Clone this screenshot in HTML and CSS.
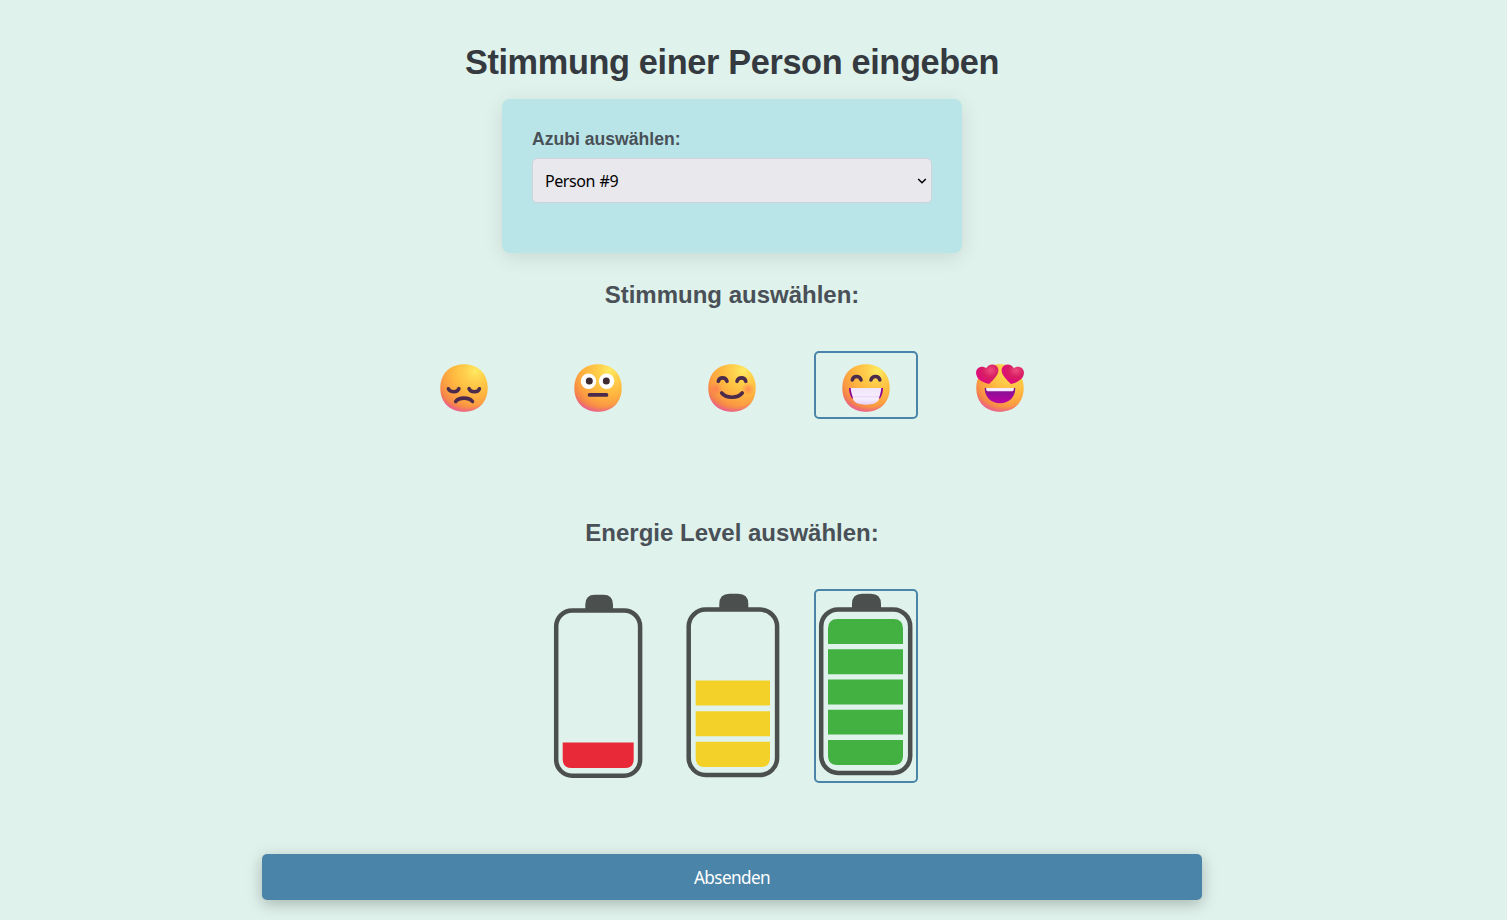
FILE: index.html
```html
<!DOCTYPE html>
<html lang="de">
<head>
<meta charset="utf-8">
<title>Stimmung einer Person eingeben</title>
<link rel="stylesheet" href="styles.css">
</head>
<body>
<svg class="defs" width="0" height="0" aria-hidden="true">
  <defs>
    <radialGradient id="skin" cx="0.74" cy="0.14" r="0.95">
      <stop offset="0" stop-color="#ffea62"/><stop offset="0.22" stop-color="#ffd14c"/><stop offset="0.5" stop-color="#ffb940"/><stop offset="0.76" stop-color="#fb9c42"/><stop offset="1" stop-color="#ee7052"/>
    </radialGradient>
    <radialGradient id="glow" cx="0.56" cy="0.27" r="0.76">
      <stop offset="0.83" stop-color="#ee5ba0" stop-opacity="0"/><stop offset="1" stop-color="#e458b4" stop-opacity="0.8"/>
    </radialGradient>
    <radialGradient id="blush"><stop offset="0" stop-color="#ff7058" stop-opacity="0.65"/><stop offset="1" stop-color="#ff7058" stop-opacity="0"/></radialGradient>
    <radialGradient id="heart" cx="0.65" cy="0.3" r="0.75"><stop offset="0" stop-color="#ee4b80"/><stop offset="0.45" stop-color="#d81f62"/><stop offset="1" stop-color="#e00484"/></radialGradient>
    <linearGradient id="mouth" x2="0" y2="1"><stop offset="0" stop-color="#7c1590"/><stop offset="1" stop-color="#bd00a4"/></linearGradient>
    <linearGradient id="teeth" x2="0" y2="1"><stop offset="0" stop-color="#f0e5fa"/><stop offset="0.65" stop-color="#f7eeff"/><stop offset="1" stop-color="#e5d2fa"/></linearGradient>
    <g id="face">
      <path d="M24 .3C38 .3 47.700 9.500 47.700 24S38 47.700 24 47.700.3 38.500.3 24 10 .3 24 .3Z" fill="url(#skin)"/>
      <path d="M24 .3C38 .3 47.700 9.500 47.700 24S38 47.700 24 47.700.3 38.500.3 24 10 .3 24 .3Z" fill="url(#glow)"/>
    </g>
  </defs>
</svg>
<main class="page">
  <h1 class="title">Stimmung einer Person eingeben</h1>
  <section class="card">
    <label class="label" for="person">Azubi auswählen:</label>
    <div class="select-wrap">
      <select class="select" id="person"><option>Person #9</option></select>
      <svg class="chevron" viewBox="0 0 10 8"><path d="M1.200 2L5 5.800L8.800 2"/></svg>
    </div>
  </section>

  <h2 class="heading">Stimmung auswählen:</h2>
  <div class="row">
    <div class="mood"><svg class="emoji" viewBox="0 0 48 48"><use href="#face"/><g class="ink"><path d="M8.400 24.800C9.700 28.700 17.500 28.700 18.900 24.600"/><path d="M29 24.600C30.500 28.700 38.300 28.700 39.400 24.800"/><path d="M15.700 37.500C19 33 29 33 32.500 37.500"/></g></svg></div>
    <div class="mood"><svg class="emoji" viewBox="0 0 48 48"><use href="#face"/><circle cx="14.500" cy="17.300" r="7.700" fill="#fff"/><circle cx="32.600" cy="17.300" r="7.700" fill="#fff"/><circle cx="15.300" cy="17" r="3.500" fill="#402a32"/><circle cx="32.300" cy="17" r="3.500" fill="#402a32"/><rect x="13.800" y="29" width="20.400" height="3.800" rx="1.500" fill="#4b2b4c"/></svg></div>
    <div class="mood"><svg class="emoji" viewBox="0 0 48 48"><use href="#face"/><circle cx="8" cy="25" r="6.500" fill="url(#blush)"/><circle cx="40" cy="25" r="6.500" fill="url(#blush)"/><g class="ink"><path d="M10.300 17.300C11.300 12.700 17.800 12.700 19 17.300"/><path d="M29 17.300C30.200 12.700 36.800 12.700 37.800 17.300"/><path d="M13.700 29C18.300 34.600 29.700 34.600 34.200 29"/></g></svg></div>
    <div class="mood selected"><svg class="emoji" viewBox="0 0 48 48"><use href="#face"/><g class="ink"><path d="M10.300 15.900C11.300 11.300 17.800 11.300 19 15.900"/><path d="M29 15.900C30.200 11.300 36.800 11.300 37.800 15.900"/></g><path d="M7 24H41C41 27.500 40 31.500 38 34.500L10 34.500C8 31.500 7 27.500 7 24Z" fill="#890491"/><path d="M8.700 24H39.300C39 27.500 38.300 30.200 37.300 33L36.800 35.500C34.500 42.400 13.500 42.400 11.200 35.500L10.700 33C9.700 30 9 27.500 8.700 24Z" fill="url(#teeth)"/><path d="M11 32.800H37" stroke="#e3cdf3" stroke-width=".8"/></svg></div>
    <div class="mood"><svg class="emoji" viewBox="0 0 48 48"><use href="#face"/><path d="M8.700 24H39.300C39.300 33 33.300 39.200 24 39.200S8.700 33 8.700 24Z" fill="url(#mouth)"/><path d="M10.200 24H37.800V25.600Q37.800 27.200 36.200 27.200H11.800Q10.200 27.200 10.200 25.600Z" fill="#f5ecff"/><path d="M13 20C5.500 18.300-.3 14.300.1 8.200C.4 3.200 6.500 1 10.200 4.300C12.300-.6 20-1 22 4.200C24 9.500 17.500 16 13 20Z" fill="url(#heart)"/><path d="M35 20C42.500 18.300 48.300 14.300 47.900 8.200C47.600 3.200 41.500 1 37.800 4.300C35.700-.6 28-1 26 4.200C24 9.500 30.500 16 35 20Z" fill="url(#heart)"/></svg></div>
  </div>

  <h2 class="heading energy-heading">Energie Level auswählen:</h2>
  <div class="row">
    <div class="level"><svg class="battery" viewBox="0 0 100 190"><path class="cap" d="M37.300 19V13.500Q37.300 3.700 47 3.700H55.300Q65 3.700 65 13.500V19Z"/><rect class="shell" x="8.200" y="19.500" width="83.900" height="165.200" rx="16"/><path fill="#e82937" d="M14.700 151.500H85.700V168Q85.700 177 77 177H23.700Q14.700 177 14.700 168Z"/></svg></div>
    <div class="level"><svg class="battery" viewBox="0 0 100 190"><path class="cap" d="M37.300 18V13Q37.300 2.700 47.500 2.700H56.100Q66.300 2.700 66.300 13V18Z"/><rect class="shell" x="6.700" y="18.600" width="88.400" height="165.400" rx="17"/><g fill="#f4d128"><path d="M13.700 89.500H88V114.600H13.700ZM13.700 120.200H88V145.300H13.700ZM13.700 150.700H88V167Q88 176 79 176H22.700Q13.700 176 13.700 167Z"/></g></svg></div>
    <div class="level selected"><svg class="battery" viewBox="0 0 100 190"><path class="cap" d="M36 18V13Q36 2.700 46.200 2.700H54.800Q65 2.700 65 13V18Z"/><rect class="shell" x="5.200" y="18.400" width="89" height="163.500" rx="17"/><g fill="#42b141"><path d="M12 53.100V37.500Q12 27.900 21.500 27.900H77.500Q87 27.900 87 37.500V53.100ZM12 58.200H87V83.200H12ZM12 88.400H87V113.400H12ZM12 118.700H87V143.600H12ZM12 149H87V164.500Q87 174 77.500 174H21.500Q12 174 12 164.500Z"/></g></svg></div>
  </div>
  <button class="submit" type="button">Absenden</button>
</main>
</body>
</html>
```
FILE: styles.css
```css
* { box-sizing: border-box; }
body {
  margin: 0;
  height: 920px;
  overflow: hidden;
  background: #dff2eb;
  color: #495057;
  font-family: "Liberation Sans", Arial, sans-serif;
}
.defs { display: block; }
.page {
  display: flex;
  flex-direction: column;
  align-items: center;
  width: 940px;
  margin-left: 262px;
  padding-top: 42px;
}
.title {
  margin: 0 0 17px;
  font-size: 34.300px;
  letter-spacing: -0.36px;
  line-height: 40px;
  color: #343a40;
  white-space: nowrap;
}
.card {
  width: 460px;
  height: 154px;
  padding: 30px;
  border-radius: 8px;
  background: #b9e5e8;
  box-shadow: 0 4px 20px rgba(0, 0, 0, 0.1);
}
.label {
  display: block;
  margin-bottom: 9px;
  font-size: 17.600px;
  font-weight: 700;
  line-height: 20px;
}
.select-wrap { position: relative; }
.select {
  display: block;
  width: 400px;
  height: 45px;
  padding: 0 24px 0 12px;
  border: 1px solid #ced4da;
  border-radius: 5px;
  background-color: #e9e8ed;
  color: #000;
  font-family: "Noto Sans", sans-serif;
  font-size: 16px;
  letter-spacing: -0.45px;
  word-spacing: 1px;
  appearance: none;
}
.chevron {
  position: absolute;
  top: 19px;
  right: 5px;
  width: 10px;
  height: 8px;
  fill: none;
  stroke: #000;
  stroke-width: 1.500;
  pointer-events: none;
}
.heading {
  margin: 28px 0 42px;
  font-size: 24px;
  line-height: 28px;
}
.row { display: flex; gap: 30px; }
.mood, .level {
  display: flex;
  justify-content: center;
  align-items: center;
  width: 104px;
  border: 2px solid transparent;
  border-radius: 5px;
}
.mood { height: 68px; padding-top: 6px; }
.level { height: 194px; }
.selected { border-color: #4a85a9; }
.emoji { width: 48px; height: 48px; }
.battery { width: 100px; height: 190px; }
.ink {
  fill: none;
  stroke: #4b2b4c;
  stroke-width: 3.600;
  stroke-linecap: round;
}
.cap { fill: #4b4f4e; }
.shell { fill: none; stroke: #4b4f4e; stroke-width: 4.500; }
.energy-heading { margin-top: 100px; }
.submit {
  width: 100%;
  height: 46px;
  margin-top: 71px;
  border: 0;
  border-radius: 5px;
  background: #4a85a9;
  box-shadow: 0 4px 15px rgba(0, 0, 0, 0.25);
  color: #fff;
  font-family: "Noto Sans", sans-serif;
  font-size: 17.200px;
  letter-spacing: -0.6px;
}
```
